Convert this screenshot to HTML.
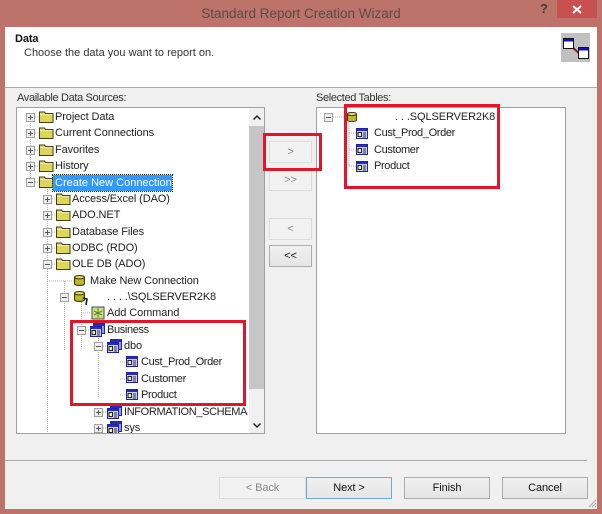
<!DOCTYPE html>
<html><head><meta charset="utf-8"><style>
html,body{margin:0;padding:0}
body{width:602px;height:514px;overflow:hidden;background:#bd7369;font-family:"Liberation Sans",sans-serif;font-size:11px;letter-spacing:-.1px;color:#222;position:relative}
div{position:absolute;box-sizing:border-box}
#w{left:0;top:0;width:602px;height:514px;filter:blur(.3px)}
.t{white-space:nowrap;line-height:16px;height:16px}
.n{letter-spacing:-.35px}
.b{text-align:center;line-height:20px;border:1px solid #acacac;background:linear-gradient(#f0f0f0,#e5e5e5);color:#111}
.d{background:#f2f2f2;border-color:#dcdcdc;color:#888}
.list{background:#fff;border:1px solid #a0a0a0;overflow:hidden}
.r{border:3px solid #e0162b}
svg{position:absolute;overflow:visible}
</style></head><body>
<svg width="0" height="0" style="position:absolute">
<symbol id="f" viewBox="0 0 15 12"><path d="M.5 2.500V1h5l1 1.500h7.500v9H.5z" fill="#ddd65a" stroke="#3e3e22"/><path d="M1 3.500h12.500" stroke="#f2eea0"/></symbol>
<symbol id="p" viewBox="0 0 9 9"><rect x=".5" y=".5" width="8" height="8" fill="#eee" stroke="#a0a0a0"/><path d="M2 4.500h5M4.500 2v5" stroke="#555"/></symbol>
<symbol id="m" viewBox="0 0 9 9"><rect x=".5" y=".5" width="8" height="8" fill="#eee" stroke="#a0a0a0"/><path d="M2 4.500h5" stroke="#555"/></symbol>
<symbol id="tb" viewBox="0 0 12 11"><rect x=".5" y=".5" width="11" height="10" fill="#c8d0f4" stroke="#2222a8"/><rect x="1" y="1" width="10" height="2" fill="#2a2ab8"/><rect x="2" y="4.500" width="3.500" height="4" fill="#f0f0a0" stroke="#222"/><path d="M7 5h3M7 7h3M7 9h3" stroke="#334"/></symbol>
<symbol id="sc" viewBox="0 0 15 14"><rect x="3.500" y=".5" width="11" height="10" fill="#8c9ce8" stroke="#2222a8"/><rect x="4" y="1" width="10" height="2" fill="#2a2ab8"/><rect x=".5" y="3.500" width="11" height="10" fill="#c8d0f4" stroke="#2222a8"/><rect x="1" y="4" width="10" height="2" fill="#2a2ab8"/><rect x="2" y="7.500" width="3.500" height="4" fill="#f0f0a0" stroke="#222"/><path d="M7 8h3M7 10h3M7 12h3" stroke="#334"/></symbol>
<symbol id="db" viewBox="0 0 10 10"><path d="M.5 2v6c0 2 9 2 9 0V2z" fill="#b9b92c" stroke="#3d3d10"/><ellipse cx="5" cy="2" rx="4.500" ry="1.500" fill="#e8e860" stroke="#3d3d10"/></symbol>
</svg>
<div id="w">
<div class="t" style="left:0;width:602px;top:6px;text-align:center;font-size:13.500px;letter-spacing:0;color:#5b4a47">Standard Report Creation Wizard</div>
<div class="t" style="left:540px;top:1px;font-size:13px;font-weight:bold;color:#4a3a38">?</div>
<div style="left:557px;top:0;width:40px;height:18px;background:#c75050"></div>
<svg style="left:572px;top:5px" width="10" height="9"><path d="M1 1l8 7M9 1L1 8" stroke="#fff" stroke-width="2"/></svg>

<div style="left:5px;top:27px;width:592px;height:482px;background:#f0f0f0"></div>
<div style="left:5px;top:27px;width:592px;height:61px;background:#fff;border-bottom:1px solid #a9a9a9"></div>
<div class="t" style="left:15px;top:31px;font-weight:bold;color:#111">Data</div>
<div class="t" style="left:24px;top:45px;color:#333;letter-spacing:0">Choose the data you want to report on.</div>
<div style="left:561px;top:33px;width:29px;height:29px;background:#c0c0c0"></div>
<svg style="left:563px;top:38px" width="26" height="21"><path d="M9 9l8 7" stroke="#8a1a1a" stroke-width="2"/><rect x=".5" y=".5" width="10" height="10" fill="#fff" stroke="#111"/><rect x="1" y="1" width="9" height="2.500" fill="#1010c0"/><rect x="15.500" y="9.500" width="10" height="11" fill="#fff" stroke="#111"/><rect x="16" y="10" width="9" height="2.500" fill="#1010c0"/></svg>

<div class="t n" style="left:17px;top:90px;color:#333">Available Data Sources:</div>
<div class="t n" style="left:316px;top:90px;color:#333">Selected Tables:</div>

<div class="list" style="left:16px;top:107px;width:249px;height:327px">
 <div style="left:232px;top:0;width:15px;height:325px;background:#f0f0f0"></div>
 <div style="left:232px;top:18px;width:15px;height:263px;background:#c6c6c6"></div>
 <svg style="left:236px;top:7px" width="8" height="5"><path d="M.5 4.500l3.500-3.500 3.500 3.500" fill="none" stroke="#222" stroke-width="1.500"/></svg>
 <svg style="left:236px;top:315px" width="8" height="5"><path d="M.5.500l3.500 3.500 3.500-3.500" fill="none" stroke="#222" stroke-width="1.500"/></svg>
 <div style="left:0;top:0;width:231px;height:325px;overflow:hidden">
  <svg style="left:0;top:0" width="231" height="325">
   <g stroke="#b0b0b0" stroke-dasharray="1 1" fill="none">
    <path d="M13.500 9v66M30.500 75v250M47.500 173v70M64.500 190v50M81.500 230v60"/>
    <path d="M18 9h4M18 25h4M18 42h4M18 58h4M18 74h4M35 91h4M35 107h4M35 124h4M35 140h4M35 156h4M30 173h27M47 189h6M64 205h10M69 222h4M86 238h4M103 254h6M103 271h6M103 287h6M86 304h4M86 320h4"/>
   </g>
   <use href="#p" x="9" y="5" width="9" height="9"/><use href="#p" x="9" y="21" width="9" height="9"/><use href="#p" x="9" y="38" width="9" height="9"/><use href="#p" x="9" y="54" width="9" height="9"/><use href="#m" x="9" y="70" width="9" height="9"/>
   <use href="#p" x="26" y="87" width="9" height="9"/><use href="#p" x="26" y="103" width="9" height="9"/><use href="#p" x="26" y="120" width="9" height="9"/><use href="#p" x="26" y="136" width="9" height="9"/><use href="#m" x="26" y="152" width="9" height="9"/>
   <use href="#m" x="43" y="185" width="9" height="9"/><use href="#m" x="60" y="218" width="9" height="9"/><use href="#m" x="77" y="234" width="9" height="9"/><use href="#p" x="77" y="300" width="9" height="9"/><use href="#p" x="77" y="316" width="9" height="9"/>
   <use href="#f" x="22" y="3" width="15" height="12"/><use href="#f" x="22" y="19" width="15" height="12"/><use href="#f" x="22" y="36" width="15" height="12"/><use href="#f" x="22" y="52" width="15" height="12"/><use href="#f" x="22" y="68" width="15" height="12"/>
   <use href="#f" x="39" y="85" width="15" height="12"/><use href="#f" x="39" y="101" width="15" height="12"/><use href="#f" x="39" y="118" width="15" height="12"/><use href="#f" x="39" y="134" width="15" height="12"/><use href="#f" x="39" y="150" width="15" height="12"/>
   <use href="#db" x="57" y="167" width="11" height="11"/><use href="#db" x="57" y="183" width="11" height="11"/>
   <path d="M66 190l4 1-1 6" fill="none" stroke="#111" stroke-width="1.500"/>
   <rect x="75" y="199" width="12" height="12" fill="#c8e080" stroke="#446"/><path d="M77 203l8 4M85 203l-8 4M81 200v10" stroke="#5a8a20"/>
   <use href="#sc" x="73" y="215" width="15" height="14"/><use href="#sc" x="90" y="231" width="15" height="14"/>
   <use href="#tb" x="109" y="248" width="12" height="11"/><use href="#tb" x="109" y="264" width="12" height="11"/><use href="#tb" x="109" y="281" width="12" height="11"/>
   <use href="#sc" x="90" y="297" width="15" height="14"/><use href="#sc" x="90" y="313" width="15" height="14"/>
  </svg>
  <div class="t" style="left:38px;top:1px">Project Data</div>
  <div class="t" style="left:38px;top:17px">Current Connections</div>
  <div class="t" style="left:38px;top:34px">Favorites</div>
  <div class="t" style="left:38px;top:50px">History</div>
  <div class="t" style="left:36px;top:67px;width:119px;background:#39f;color:#fff;outline:1px dotted #222;padding-left:2px;letter-spacing:0">Create New Connection</div>
  <div class="t" style="left:55px;top:83px">Access/Excel (DAO)</div>
  <div class="t" style="left:55px;top:99px">ADO.NET</div>
  <div class="t" style="left:55px;top:116px">Database Files</div>
  <div class="t" style="left:55px;top:132px">ODBC (RDO)</div>
  <div class="t" style="left:55px;top:148px">OLE DB (ADO)</div>
  <div class="t" style="left:73px;top:165px">Make New Connection</div>
  <div class="t" style="left:90px;top:181px">. . . .\SQLSERVER2K8</div>
  <div class="t" style="left:90px;top:197px">Add Command</div>
  <div class="t n" style="left:90px;top:214px">Business</div>
  <div class="t" style="left:107px;top:230px">dbo</div>
  <div class="t n" style="left:124px;top:246px">Cust_Prod_Order</div>
  <div class="t n" style="left:124px;top:263px">Customer</div>
  <div class="t n" style="left:124px;top:279px">Product</div>
  <div class="t n" style="left:107px;top:296px">INFORMATION_SCHEMA</div>
  <div class="t" style="left:107px;top:312px">sys</div>
 </div>
</div>

<div class="list" style="left:316px;top:107px;width:250px;height:327px">
 <svg style="left:0;top:0" width="240" height="80">
  <g stroke="#b0b0b0" stroke-dasharray="1 1" fill="none"><path d="M16 9h14M32 25h7M32 42h7M32 58h7M32 14v44"/></g>
  <use href="#m" x="7" y="5" width="9" height="9"/>
  <use href="#db" x="30" y="4" width="10" height="10"/>
  <use href="#tb" x="39" y="20" width="12" height="11"/><use href="#tb" x="39" y="36" width="12" height="11"/><use href="#tb" x="39" y="53" width="12" height="11"/>
 </svg>
 <div class="t" style="left:78px;top:1px">. . .SQLSERVER2K8</div>
 <div class="t n" style="left:57px;top:17px">Cust_Prod_Order</div>
 <div class="t n" style="left:57px;top:34px">Customer</div>
 <div class="t n" style="left:57px;top:50px">Product</div>
</div>

<div class="b d" style="left:269px;top:141px;width:43px;height:22px">&gt;</div>
<div class="b d" style="left:269px;top:169px;width:43px;height:22px">&gt;&gt;</div>
<div class="b d" style="left:269px;top:218px;width:43px;height:22px">&lt;</div>
<div class="b" style="left:269px;top:245px;width:43px;height:22px">&lt;&lt;</div>

<div class="r" style="left:263px;top:133px;width:59px;height:38px"></div>
<div class="r" style="left:344px;top:104px;width:156px;height:85px"></div>
<div class="r" style="left:70px;top:320px;width:176px;height:86px"></div>

<div style="left:5px;top:460px;width:582px;height:1px;background:#a9a9a9"></div>
<div class="b d" style="left:219px;top:477px;width:87px;height:22px">&lt; Back</div>
<div class="b" style="left:306px;top:477px;width:86px;height:22px;border-color:#70a8e0">Next &gt;</div>
<div class="b" style="left:404px;top:477px;width:86px;height:22px">Finish</div>
<div class="b" style="left:502px;top:477px;width:86px;height:22px">Cancel</div>
<svg style="left:587px;top:498px" width="10" height="10"><path d="M9 2L2 9M9 5L5 9M9 8L8 9" stroke="#aaa"/></svg>
</div>
</body></html>
